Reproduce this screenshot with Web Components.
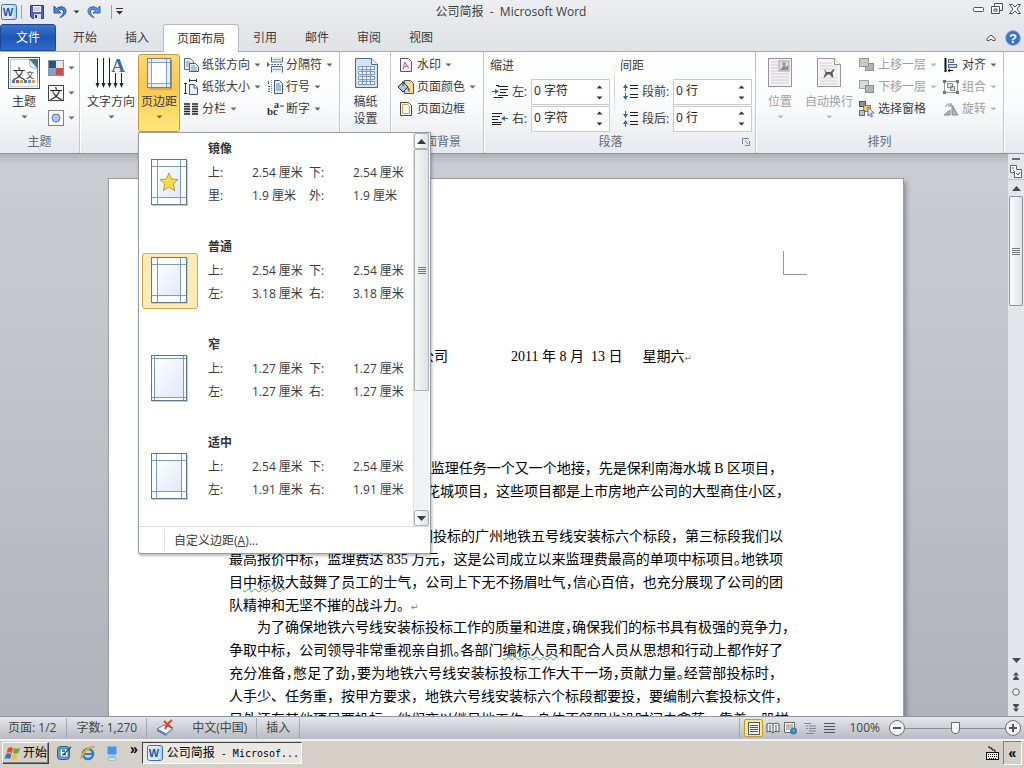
<!DOCTYPE html>
<html lang="zh-CN">
<head>
<meta charset="utf-8">
<title>公司简报 - Microsoft Word</title>
<style>
html,body{margin:0;height:100%;overflow:hidden}
body{font:12px/16px "Open Sans","Noto Sans CJK SC",sans-serif;color:#3b3b3b}
</style>
</head>
<body>
<word-app></word-app>
<script>
const ICONS = {
word:[16,16,'<rect x=".5" y=".5" width="15" height="15" rx="2" fill="#e9f1fb" stroke="#3f6fb5"/><path d="M11 2h3v12h-3" fill="#fff" stroke="#8fb0dc"/><path d="M11.500 5h2M11.500 8h2M11.500 11h2" stroke="#8fb0dc"/><rect x="2" y="2" width="10" height="12" fill="#d5e5f8"/><text x="7" y="12" font-size="11" font-weight="700" font-family="Liberation Sans" text-anchor="middle" fill="#1f57a8">W</text>'],
save:[14,14,'<path d="M.5.5h13v13h-11l-2-2z" fill="#5560b8" stroke="#31388c"/><rect x="3" y="1" width="8" height="6" fill="#e8f0fc"/><path d="M4 3h6M4 5h6" stroke="#a8b8dc"/><rect x="4" y="9" width="7" height="5" fill="#d8dcf0"/><rect x="5" y="10" width="2" height="3" fill="#31388c"/>'],
undo:[14,14,'<path d="M1 1v7h7L5.500 5.500c2-2 5.500-1 5 2-.3 2-2 3.500-3.500 5 3-1 6-3 6-6.500C13 1.500 7 .5 3.500 3.500z" fill="#4f80d4" stroke="#2f56a4"/>'],
redo:[14,14,'<path d="M13 1v7H6l2.500-2.500c-2-2-5.500-1-5 2 .3 2 2 3.500 3.500 5-3-1-6-3-6-6.500C1 1.500 7 .5 10.500 3.500z" fill="#5a96e0" stroke="#2f66b0"/>'],
down:[7,4,'<path d="M.5.500h6L3.500 3.500z" fill="currentColor"/>'],
up:[7,4,'<path d="M.5 3.500h6L3.500.5z" fill="currentColor"/>'],
downBig:[9,5,'<path d="M0 0h9L4.500 5z" fill="currentColor"/>'],
upBig:[9,5,'<path d="M0 5h9L4.500 0z" fill="currentColor"/>'],
custom:[7,7,'<path d="M0 .5h7" stroke="#333"/><path d="M0 3h7L3.500 6.500z" fill="#333"/>'],
min:[12,5,'<rect x=".5" y=".5" width="10" height="4" rx="1" fill="#fff" stroke="#4a5058"/>'],
restore:[12,12,'<path d="M3.500.5h8v7h-8z" fill="#fff" stroke="#4a5058"/><path d="M.5 3.500h8v7h-8z" fill="#fff" stroke="#4a5058"/><path d="M3 6h3v2H3z" fill="none" stroke="#4a5058"/>'],
close:[12,10,'<path d="M.5.500h3L6 3 8.500.500h3L8 5l3.500 4.500h-3L6 7 3.500 9.500h-3L4 5z" fill="#fff" stroke="#4a5058"/>'],
collapse:[10,8,'<path d="M1 6.500V4.500L5 1l4 3.500v2H7L5 5 3 6.500z" fill="#fff" stroke="#4a4f57"/>'],
help:[16,16,'<circle cx="8" cy="8" r="7.500" fill="#3c72c4" stroke="#9cb9e4"/><text x="8" y="12.500" font-size="13" font-weight="700" font-family="Liberation Sans" text-anchor="middle" fill="#fff">?</text>'],
theme:[32,32,'<rect x=".5" y=".5" width="31" height="31" fill="#f4f7fb" stroke="#474d55"/><rect x="2.500" y="2.500" width="27" height="27" fill="#fff" stroke="#c5cfdc"/><path d="M21 2h9v27l-1-17z" fill="#4a6f94"/><path d="M21 2l1 8 8 2z" fill="#e8eef6" stroke="#7690b0" stroke-width=".6"/><text x="11" y="21" font-size="13" text-anchor="middle" fill="#333">文</text><text x="22" y="21" font-size="8" text-anchor="middle" fill="#333">文</text><path d="M4 23h3v3H4z" fill="#5579a8"/><path d="M8 23h3v3H8z" fill="#b85450"/><path d="M12 23h3v3h-3z" fill="#94b455"/><path d="M16 23h3v3h-3z" fill="#8064a2"/><path d="M20 23h3v3h-3z" fill="#4bacc6"/><path d="M24 23h3v3h-3z" fill="#e79b4d"/>'],
colors:[16,16,'<rect x=".5" y=".5" width="15" height="15" fill="#fff" stroke="#8a929c"/><rect x="1" y="1" width="7" height="7" fill="#2c5282"/><rect x="8" y="1" width="7" height="7" fill="#e6e8ea"/><rect x="1" y="8" width="7" height="7" fill="#7ba3d4"/><rect x="8" y="8" width="7" height="7" fill="#c4504c"/>'],
fonts:[16,16,'<rect x=".5" y=".5" width="15" height="15" fill="#fff" stroke="#3f454d"/><text x="8" y="13" font-size="13" text-anchor="middle" fill="#222">文</text>'],
effects:[16,16,'<rect x=".5" y=".5" width="15" height="15" fill="#fff" stroke="#7d8793"/><circle cx="8" cy="8" r="4" fill="#a9c6f0" stroke="#5b81b8"/>'],
textdir:[32,32,'<g stroke="#222"><path d="M2.500 1v27M8.500 1v27M14.500 1v27M20.500 16v12M26.500 16v12"/></g><g fill="#222"><path d="M.5 26h4L2.500 31zM6.500 26h4l-2 5zM12.500 26h4l-2 5zM18.500 26h4l-2 5zM24.500 26h4l-2 5z"/></g><text x="23" y="15" font-size="19" font-weight="700" font-family="Liberation Serif" text-anchor="middle" fill="#3a68a8">A</text>'],
margins:[32,32,'<rect x="4.500" y="1.500" width="23" height="29" fill="#e6effa" stroke="#7b7f88"/><path d="M8 5h16v22H8z" fill="#fff"/><path d="M8.500 2v28M23.500 2v28M5 5.500h22M5 26.500h22" stroke="#7da6d8"/><path d="M28.500 3v29H6" fill="none" stroke="#b08a38"/>'],
orient:[16,14,'<path d="M1.500.5h6l3 3v8h-9z" fill="#e3edf9" stroke="#566a85"/><path d="M3 4h4M3 6h4M3 8h3" stroke="#7a93b8"/><path d="M6.500 5.500h6l3 3v5h-9z" fill="#f3f7fc" stroke="#435a78"/><path d="M8 8h4M8 10h6M8 12h6" stroke="#6d8cb8"/>'],
size:[14,16,'<path d="M5 1.500h8M5.500 0v3M12.500 0v3M1.500 4v11M0 4.500h3M0 14.500h3" stroke="#333" fill="none"/><path d="M5.500 5.500h5l3 3v7h-8z" fill="#e8f0fb" stroke="#435a78"/><path d="M10 5v4h4" fill="#fff" stroke="#435a78"/>'],
columns:[14,12,'<path d="M0 1h6M0 3.500h6M0 6h6M0 8.500h6M0 11h6M8 1h6M8 3.500h6M8 6h6M8 8.500h6M8 11h6" stroke="#222" stroke-width="1.300"/>'],
breaks:[16,16,'<path d="M4.500 0v5h11V0M4.500 15.500v-6h11v6" fill="#e3edf9" stroke="#566a85"/><path d="M4 7.500h12" stroke="#566a85" stroke-dasharray="2 1"/><path d="M6 2.500h8M6 12.500h8" stroke="#8aa8d2"/><path d="M0 5l3 2.500L0 10z" fill="#3467b0"/>'],
linenum:[16,14,'<path d="M1.500 1v3M1 6.500h2M1 9h2M1 11.500h2" stroke="#2a559c"/><path d="M4.500 0v14" stroke="#6d88b0" stroke-dasharray="1 1"/><path d="M7.500.5h5l3 3v10h-8z" fill="#eaf1fb" stroke="#435a78"/><path d="M9 4h4M9 6h5M9 8h5M9 10h5" stroke="#5d82b8"/>'],
hyphen:[17,14,'<text x="0" y="13" font-size="11" font-weight="700" font-family="Liberation Serif" fill="#333">bc</text><text x="7" y="6" font-size="10" font-weight="700" font-family="Liberation Serif" fill="#333">a</text><path d="M13 4h4" stroke="#333"/>'],
genko:[32,32,'<path d="M5.500 1.500h16l6 6v23h-22z" fill="#d3e2f7" stroke="#51688c"/><path d="M21.500 1.500v6h6" fill="#fff" stroke="#51688c"/><g stroke="#8298bd" fill="#f6faff"><path d="M8.500 9.500h16v3h-16zM8.500 14.500h16v3h-16zM8.500 19.500h16v3h-16zM8.500 24.500h16v3h-16z"/><path d="M12.500 9v19M16.500 9v19M20.500 9v19"/></g>'],
watermark:[14,14,'<path d="M1.500.5h8l3 3v10h-11z" fill="#f6f7fa" stroke="#556"/><text x="6.500" y="11" font-size="10" font-family="Liberation Sans" text-anchor="middle" fill="#c44a6c" transform="rotate(-12 6 8)">A</text>'],
pagecolor:[16,14,'<path d="M6.500.5h6l3 3v10h-9z" fill="#fbd98a" stroke="#555"/><path d="M0 7l5-5 5 5-5 5z" fill="#a9c4e6" stroke="#333"/><path d="M5 1v5" stroke="#333"/><path d="M10 7c2 1 2 4 1 5-1-1-2-3-1-5" fill="#2f64b8"/>'],
borders:[14,14,'<path d="M1.500.5h8l3 3v10h-11z" fill="#fdf6e6" stroke="#4d4a44"/><path d="M3.500 2.500h5l2 2v7h-7z" fill="#fff" stroke="#d8a850"/>'],
indentL:[16,14,'<path d="M6 1.500h10M8 4.500h8M8 7.500h6M6 10.500h10M2 12.500h9M4 .500h3" stroke="#222" stroke-width="1.200"/><path d="M0 6.500h4" stroke="#3465b0"/><path d="M3 4l4 2.500L3 9z" fill="#3465b0"/>'],
indentR:[16,14,'<path d="M0 1.500h10M0 4.500h8M0 7.500h6M0 10.500h10M0 12.500h9" stroke="#222" stroke-width="1.200"/><path d="M16 6.500h-4" stroke="#3465b0"/><path d="M13 4L9 6.500 13 9z" fill="#3465b0"/>'],
spaceB:[16,16,'<path d="M3.500 2v5M3.500 9v5" stroke="#3465b0"/><path d="M1 4l2.500-4L6 4zM1 12l2.500 4L6 12z" fill="#3465b0"/><path d="M8 1.500h8M8 4.500h8M8 10.500h8M8 13.500h8" stroke="#222"/>'],
spaceA:[16,16,'<path d="M3.500 0v4M3.500 12v4" stroke="#3465b0"/><path d="M1 3l2.500 4L6 3zM1 13l2.500-4L6 13z" fill="#3465b0"/><path d="M8 1.500h8M8 4.500h8M8 10.500h8M8 13.500h8" stroke="#222"/>'],
position:[32,32,'<rect x="4.500" y="1.500" width="23" height="28" fill="#f3f1f4" stroke="#98949c"/><path d="M7 5h7M7 8h7M7 11h7M7 14h7M7 17h18M7 20h18M7 23h18M7 26h18" stroke="#d3cdd4"/><rect x="15" y="4" width="10" height="10" fill="#e2e0e4" stroke="#a09ca4"/><path d="M16 13l4-5 2 2 2-2v5z" fill="#8f8b92"/><circle cx="20" cy="7" r="2" fill="#a29ea5"/>'],
wrap:[32,32,'<path d="M4.500 1.500h17l6 6v22h-23z" fill="#f5f3f5" stroke="#98949c"/><path d="M21.500 1.500v6h6" fill="#fff" stroke="#98949c"/><path d="M7 6h12M7 9h17M7 12h17M7 21h17M7 24h17M7 27h17" stroke="#d6d0d6"/><path d="M11 12l2.500 3h4l3-3 1 1-2 3 1 4-1.500.5-2-3h-2.500l-3 3-1-.5 2-4z" fill="#5f5a61"/>'],
front:[16,14,'<rect x="6.500" y="5.500" width="8" height="7" fill="#b5b5b7" stroke="#8e8e92"/><rect x=".5" y=".5" width="9" height="8" fill="#c9c9cb" stroke="#98989c"/>'],
back:[16,14,'<rect x=".5" y=".5" width="9" height="8" fill="#d9d9dc" stroke="#a2a2a6"/><rect x="6.500" y="5.500" width="8" height="7" fill="#b5b5b7" stroke="#8e8e92"/>'],
pane:[16,16,'<rect x=".5" y=".5" width="6" height="5" fill="#8c939c" stroke="#4a4f58"/><rect x="4.500" y="4.500" width="7" height="6" fill="#f5c64e" stroke="#9c7a24"/><rect x=".5" y="9.500" width="5" height="5" fill="#bcc2ca" stroke="#666c75"/><path d="M9 6l6 6-3 .3 1.500 3-1.500.700-1.500-3L9 15z" fill="#dceafa" stroke="#3c6090" stroke-width=".8"/>'],
align:[14,14,'<path d="M1.500 0v14" stroke="#111" stroke-width="2"/><rect x="4.500" y="1.500" width="5" height="3" fill="#c8d6e8" stroke="#556a88"/><rect x="4.500" y="6.500" width="8" height="3" fill="#c8d6e8" stroke="#556a88"/><path d="M4 12.500h5M6 11l-2 1.500L6 14" stroke="#111" fill="none"/>'],
group:[16,14,'<path d="M1.500 1.500h13v11h-13z" fill="none" stroke="#999"/><path d="M0 0h3v3H0zM13 0h3v3h-3zM0 11h3v3H0zM13 11h3v3h-3z" fill="#77777b"/><path d="M4.500 3.500h5v4h-5zM7.500 6.500h4v4h-4z" fill="#ddd" stroke="#88888c"/>'],
rotate:[16,14,'<path d="M1 13l6-5v5zM9 13V3l6 10z" fill="#b4b4b8" stroke="#8a8a90"/><path d="M3 5c0-3 3-4 5-2M8 1v3H5" fill="none" stroke="#8a8a90"/>'],
launch:[8,8,'<path d="M.5 6V.5H7" fill="none" stroke="#7b8490"/><path d="M3 3l3 3M7.500 3v4.500H3" fill="none" stroke="#7b8490"/>'],
ruler:[12,13,'<path d="M.5.500h6v4h5v8h-7v-5h-4z" fill="#fff" stroke="#5b6470"/><path d="M2 3h2M6 8l2 2 2-3M3 5l2 2" fill="none" stroke="#5b6470"/>'],
prev:[8,8,'<path d="M1 3.500L4 0l3 3.500zM1 7l3-3.500L7 7z" fill="#444b55"/><path d="M1 7.500h6" stroke="#444b55"/>'],
next:[8,8,'<path d="M1 1h6L4 4.500zM1 4.500h6L4 8z" fill="#444b55"/><path d="M1 .5h6" stroke="#444b55"/>'],
ball:[8,8,'<circle cx="4" cy="4" r="3.300" fill="#eef0f4" stroke="#59616d"/>'],
spell:[18,16,'<path d="M1 9l7-4 9 3-7 6z" fill="#f4f8fd" stroke="#5d6f88"/><path d="M1 9l9 5v2L1 11z" fill="#4d7fc4"/><path d="M10 14l7-6v2l-7 6z" fill="#8aa8d2"/><path d="M8 1c3 3 5 5 8 7M16 0c-3 2-5 5-7 9" stroke="#d8422c" stroke-width="2" fill="none"/>'],
vPrint:[14,13,'<rect x="1.500" y=".5" width="11" height="12" fill="#fff" stroke="#555"/><path d="M3 3.500h8M3 5.500h8M3 7.500h8M3 9.500h8" stroke="#555"/>'],
vRead:[14,12,'<path d="M1 2c2-1 4-1 6 0 2-1 4-1 6 0v8c-2-1-4-1-6 1-2-2-4-2-6-1z" fill="#f4f4f4" stroke="#555"/><path d="M7 2v9M3 4h2M3 6h2M3 8h2M9 4h2M9 6h2M9 8h2" stroke="#555"/>'],
vWeb:[14,13,'<path d="M.5.500h10v10H.5z" fill="#fff" stroke="#666"/><path d="M2 3h7M2 5h7M2 7h4" stroke="#777"/><circle cx="9.500" cy="9" r="3.500" fill="#3f79b8"/><path d="M8 7l3 1-1 3z" fill="#7cb874"/>'],
vOut:[12,11,'<path d="M0 .500h7M2 3h2M5 3h7M2 5.500h2M5 5.500h7M5 8h7M2 10.500h8" stroke="#85898f"/>'],
vDraft:[12,10,'<path d="M0 .500h11M0 3.500h11M0 6.500h11M0 9.500h11" stroke="#555"/>'],
flag:[18,16,'<path d="M4 3c2-1 4-1 5 0L8 8C6 7 4 7 2.500 8z" fill="#e0522c"/><path d="M10 3c2 1 4 1 6 0l-1.500 5c-2 1-4 1-5.500 0z" fill="#6bab3c"/><path d="M2 9c2-1 4-1 5.500 0L6 14c-2-1-4-1-5.500 0z" fill="#3a72c8"/><path d="M8.500 9c2 1 4 1 5.500 0l-1.500 5c-2 1-4 1-5.500 0z" fill="#f0c034"/>'],
desk:[16,16,'<rect x="1.500" y="1.500" width="12" height="13" rx="3" fill="#6aa8d0" stroke="#235f86"/><rect x="4" y="4" width="8" height="8" fill="#fff" stroke="#3a78a4"/><path d="M6 6h3M6 9.500h4M8 9l7-7" stroke="#1f4f78" stroke-width="1.300"/>'],
ie:[16,16,'<circle cx="8" cy="9" r="5" fill="none" stroke="#2f7fd0" stroke-width="2.600"/><path d="M4 9h9" stroke="#2f7fd0" stroke-width="2"/><path d="M1 14C-1 9 9-1 15 2c-5 0-11 6-14 12" fill="#f0b52c" stroke="#c98a14" stroke-width=".5"/>'],
monitor:[16,16,'<rect x="3" y="1" width="10" height="9" rx="1.500" fill="#4a94e0" stroke="#b8d4f0"/><path d="M6 10h4l2 3H4z" fill="#9fc2e8"/><ellipse cx="8" cy="14" rx="4.500" ry="1.500" fill="#d8e8f8" stroke="#6b93bd" stroke-width=".6"/>'],
keyboard:[14,15,'<path d="M3 0v2h3v2h3v2" fill="none" stroke="#111"/><rect x=".5" y="6.500" width="12" height="7" fill="#fff" stroke="#111"/><path d="M2 8.500h9M2 10.500h9M3 12.500h7" stroke="#111" stroke-dasharray="1 1"/>']
};
const thumb = (l, t, star) => `<rect x="1" y="1" width="36" height="46" fill="#c6ccd4"/><rect x=".5" y=".5" width="35" height="45" fill="#fbfdff" stroke="#64778c"/><path d="M${l} ${t}h${36-2*l}v${46-2*t}h-${36-2*l}z" fill="url(#p)"/><path d="M${l+.5} 1v44M${35.5-l} 1v44M1 ${t+.5}h34M1 ${45.5-t}h34" stroke="#7d9db8"/>` + (star ? '<path d="M18 14l2.600 6 6.400.6-4.800 4.400 1.500 6.500L18 28l-5.700 3.500 1.500-6.500L9 20.600l6.400-.6z" fill="#f8dc4c" stroke="#c9962c"/>' : '');
ICONS.mMirror = [38,48,thumb(6,7,true)];
ICONS.mNormal = [38,48,thumb(6,7)];
ICONS.mNarrow = [38,48,thumb(3,3)];
ICONS.mModerate = [38,48,thumb(5,7)];

const RESET = '*{box-sizing:border-box}button,input{font:inherit;color:inherit;margin:0}button{background:none;border:0;padding:0;cursor:default}';

function define(name, render) {
  customElements.define(name, class extends HTMLElement {
    constructor() {
      super();
      this.attachShadow({mode: 'open'});
    }
    connectedCallback() {
      if (this.shadowRoot.firstChild) return;
      const t = document.createElement('template');
      t.innerHTML = `<style>${RESET}</style>` + render(this);
      this.shadowRoot.append(t.content.cloneNode(true));
    }
  });
}

define('ui-icon', el => {
  const [w, h, body] = ICONS[el.getAttribute('name')];
  return `<style>:host{display:inline-flex;flex:none;width:${w}px;height:${h}px}svg{display:block;overflow:visible}</style>
  <svg width="${w}" height="${h}" viewBox="0 0 ${w} ${h}" font-family="Noto Sans CJK SC" aria-hidden="true"><defs><linearGradient id="p" x2="1" y2="1"><stop stop-color="#fff"/><stop offset="1" stop-color="#dde8fa"/></linearGradient></defs>${body}</svg>`;
});

/* Title bar */
define('title-bar', () => `<style>
:host{display:grid;grid-template-columns:1fr auto 1fr;align-items:center;height:24px;padding:0 3px 0 1px}
.quick,.win{display:flex;align-items:center}
.quick{gap:4px;padding-bottom:1px}.quick i{width:1px;height:14px;background:#9aa0a8;margin-right:4px}
.quick .gap{margin:0;background:none}.quick .last{margin:0 0 0 6px}
.quick button,.win button{display:flex}
.drop{margin:0 3px 0 2px}
.win{justify-content:flex-end;gap:6px;padding-bottom:6px}
h1{font-size:12px;line-height:16px;font-weight:400;margin:0}
</style>
<div class="quick"><button aria-label="Word"><ui-icon name="word"></ui-icon></button><i></i>
<button aria-label="保存"><ui-icon name="save"></ui-icon></button><i class="gap"></i>
<button aria-label="撤消"><ui-icon name="undo"></ui-icon></button><button class="drop" aria-label="撤消列表"><ui-icon name="down"></ui-icon></button>
<button aria-label="重复"><ui-icon name="redo"></ui-icon></button><i class="last"></i>
<button aria-label="自定义快速访问工具栏"><ui-icon name="custom"></ui-icon></button></div>
<h1>公司简报&nbsp; -&nbsp; Microsoft Word</h1>
<div class="win"><button aria-label="最小化"><ui-icon name="min"></ui-icon></button><button aria-label="还原"><ui-icon name="restore"></ui-icon></button><button aria-label="关闭"><ui-icon name="close"></ui-icon></button></div>`);

/* Ribbon tabs */
define('ribbon-tabs', () => `<style>
:host{display:flex;align-items:flex-end;height:28px;border-bottom:1px solid #a5acb5}
nav{display:flex;height:100%}
button{height:27px;padding:0 14px}
.file{width:56px;padding:0;margin-right:3px;color:#fff;border-radius:3px 3px 0 0;border:1px solid #1c4a98;background:linear-gradient(#3a74cc,#1f55b4 50%,#2c6bd0)}
.on{height:28px;background:#fff;border:1px solid #b5bac1;border-bottom:0;border-radius:3px 3px 0 0;padding:0 13px}
.side{margin-left:auto;display:flex;gap:9px;align-items:center;height:27px;padding-right:3px}
.side button{padding:0;height:auto;display:flex}
</style>
<nav aria-label="功能区选项卡"><button class="file">文件</button><button>开始</button><button>插入</button><button class="on">页面布局</button><button>引用</button><button>邮件</button><button>审阅</button><button>视图</button></nav>
<div class="side"><button aria-label="折叠功能区"><ui-icon name="collapse"></ui-icon></button><button aria-label="帮助"><ui-icon name="help"></ui-icon></button></div>`);

/* A captioned ribbon group: contents on top, caption at the bottom */
define('ribbon-group', el => `<style>
:host{display:flex;flex-direction:column;flex:none;height:100%;border-right:1px solid #c3c8cf;box-shadow:1px 0 #fff}
.body{display:flex;height:80px;padding-top:2px}
footer{position:relative;text-align:center;line-height:20px;color:#5f6b7c}
:host([launcher]) footer{padding-right:18px}
button{position:absolute;right:5px;top:6px;display:flex}
</style><div class="body"><slot></slot></div><footer>${el.getAttribute('label')}${el.hasAttribute('launcher') ? '<button aria-label="段落设置"><ui-icon name="launch"></ui-icon></button>' : ''}</footer>`);

define('big-button', el => `<style>
:host{display:block;flex:none;position:relative}
button{display:flex;flex-direction:column;align-items:center;width:100%;height:78px;padding-top:2px;border:1px solid transparent;border-radius:3px;line-height:17px;color:${el.hasAttribute('off') ? '#a0a0a0' : 'inherit'}}
:host([pressed]) button{border-color:#c29a3f;background:linear-gradient(#fbd976,#f9c751 40%,#ffe77c)}
.t{margin-top:4px;white-space:pre-line}
.a{margin-top:5px;color:${el.hasAttribute('off') ? '#b5b5b5' : '#666'};display:flex}
</style><button><ui-icon name="${el.getAttribute('icon')}"></ui-icon><span class="t">${el.getAttribute('label').replace('|', '\n')}</span>${el.hasAttribute('plain') ? '' : '<span class="a"><ui-icon name="down"></ui-icon></span>'}</button><slot></slot>`);

define('small-button', el => `<style>
:host{display:block}
button{display:flex;align-items:center;height:22px;gap:3px;white-space:nowrap;color:${el.hasAttribute('off') ? '#a0a0a0' : 'inherit'}}
.i{width:16px;display:flex;justify-content:center}
.a{display:flex;margin-left:1px;color:${el.hasAttribute('off') ? '#b5b5b5' : '#666'}}
</style><button aria-label="${el.getAttribute('label') || el.getAttribute('hint')}"><span class="i"><ui-icon name="${el.getAttribute('icon')}"></ui-icon></span>${el.getAttribute('label') || ''}${el.hasAttribute('plain') ? '' : '<span class="a"><ui-icon name="down"></ui-icon></span>'}</button>`);

define('spin-field', el => `<style>
:host{display:flex;align-items:center;height:27px}
label{display:flex;align-items:center;gap:4px;width:${el.getAttribute('w')}px}
.box{display:flex;width:79px;height:26px;border:1px solid #c9cdd3;background:#fff;color:#222}
input{flex:1;min-width:0;border:0;padding:0 0 2px 2px;background:none;outline:0}
.s{display:flex;flex-direction:column;justify-content:space-around;width:13px;padding:1px 0}
.s button{display:flex;color:#333}
</style><label for="f"><ui-icon name="${el.getAttribute('icon')}"></ui-icon>${el.getAttribute('label')}</label>
<span class="box"><input id="f" value="${el.getAttribute('value')}"><span class="s"><button aria-label="增加"><ui-icon name="up"></ui-icon></button><button aria-label="减少"><ui-icon name="down"></ui-icon></button></span></span>`);

/* Margins gallery */
define('margin-option', el => {
  const [a, b, c, d] = el.getAttribute('values').split(',');
  const [k1, k2] = (el.getAttribute('sides') || '左,右').split(',');
  return `<style>
:host{display:block;height:98px}
button{display:grid;grid-template-columns:56px 1fr;column-gap:10px;width:100%;height:98px;padding-left:3px;text-align:left;align-items:start}
.p{width:56px;height:56px;margin-top:18px;display:flex;align-items:center;justify-content:center;border:1px solid transparent;border-radius:3px}
:host([selected]) .p{border-color:#d8a850;background:#fcebb6}
.d{display:grid;grid-template-columns:44px 57px 44px auto;line-height:23px;justify-content:start;white-space:nowrap}
b{grid-column:1/-1;line-height:24px;color:#333}
</style><button><span class="p"><ui-icon name="${el.getAttribute('icon')}"></ui-icon></span>
<span class="d"><b>${el.getAttribute('label')}</b><span>上:</span><span>${a} 厘米</span><span>下:</span><span>${b} 厘米</span><span>${k1}:</span><span>${c} 厘米</span><span>${k2}:</span><span>${d} 厘米</span></span></button>`;
});

define('margins-menu', () => `<style>
:host{display:block;position:absolute;left:0;top:78px;width:293px;z-index:10;background:#fff;border:1px solid #979ca4;border-radius:0 0 2px 2px;box-shadow:1px 2px 3px #0004}
.top{display:flex;height:393px}
.list{flex:1;overflow:hidden;padding-top:4px}
.bar{width:16px;margin-right:1px;display:flex;flex-direction:column;background:#f1f2f4;border-left:1px solid #dcdfe3}
.bar button{display:flex;align-items:center;justify-content:center;height:16px;border:1px solid #aab0b8;border-radius:2px;background:linear-gradient(90deg,#fff,#dde1e6);color:#2f3c5c}
.bar .thumb{height:242px;flex-direction:column;gap:1px;border-radius:1px;background:linear-gradient(90deg,#f4f5f6,#e0e3e6)}
.thumb i{width:8px;height:1px;background:#777}
.track{flex:1}
.foot{display:flex;align-items:stretch;height:27px;border-top:1px solid #dcdfe3}
.foot:before{content:"";width:25px;border-right:1px solid #dcdfe3;margin:2px 0}
.foot button{padding:2px 0 0 9px}
</style>
<div class="top"><div class="list">
<margin-option label="镜像" icon="mMirror" values="2.54,2.54,1.9,1.9" sides="里,外"></margin-option>
<margin-option label="普通" icon="mNormal" values="2.54,2.54,3.18,3.18" selected></margin-option>
<margin-option label="窄" icon="mNarrow" values="1.27,1.27,1.27,1.27"></margin-option>
<margin-option label="适中" icon="mModerate" values="2.54,2.54,1.91,1.91"></margin-option>
</div><div class="bar"><button aria-label="向上滚动"><ui-icon name="upBig"></ui-icon></button><button class="thumb" aria-label="滚动条"><i></i><i></i><i></i><i></i></button><span class="track"></span><button aria-label="向下滚动"><ui-icon name="downBig"></ui-icon></button></div></div>
<div class="foot"><button>自定义边距(<u>A</u>)...</button></div>`);

define('word-ribbon', () => `<style>
:host{display:flex;position:relative;z-index:5;height:102px;background:linear-gradient(#fff,#fbfcfd 50%,#e6e9ed);border-bottom:1px solid #8d939b}
.col{display:flex;flex-direction:column}
.tall{gap:3px;padding-top:3px}
.mid{width:87px;padding-left:3px}
.head{line-height:22px;padding:1px 0 2px}
.field{padding-left:2px}
.rule{width:1px;background:linear-gradient(#fff,#c9cdd3 50%,#fff);margin:4px 5px 10px 4px}
</style>
<ribbon-group label="主题" style="width:80px"><big-button icon="theme" label="主题" style="width:48px"></big-button>
 <div class="col tall"><small-button icon="colors" hint="颜色"></small-button><small-button icon="fonts" hint="字体"></small-button><small-button icon="effects" hint="效果"></small-button></div></ribbon-group>
<ribbon-group label="页面设置" style="width:260px"><big-button icon="textdir" label="文字方向" style="width:54px;margin-left:4px"></big-button>
 <big-button icon="margins" label="页边距" pressed style="width:42px"><margins-menu></margins-menu></big-button>
 <div class="col mid"><small-button icon="orient" label="纸张方向"></small-button><small-button icon="size" label="纸张大小"></small-button><small-button icon="columns" label="分栏"></small-button></div>
 <div class="col"><small-button icon="breaks" label="分隔符"></small-button><small-button icon="linenum" label="行号"></small-button><small-button icon="hyphen" label="断字"></small-button></div></ribbon-group>
<ribbon-group label="稿纸" style="width:51px"><big-button icon="genko" label="稿纸|设置" plain style="width:51px"></big-button></ribbon-group>
<ribbon-group label="页面背景" style="width:93px"><div class="col" style="padding-left:7px"><small-button icon="watermark" label="水印"></small-button><small-button icon="pagecolor" label="页面颜色"></small-button><small-button icon="borders" label="页面边框" plain></small-button></div></ribbon-group>
<ribbon-group label="段落" launcher style="width:272px"><div class="col" style="padding-left:6px"><span class="head">缩进</span><spin-field class="field" icon="indentL" label="左:" value="0 字符" w="39"></spin-field><spin-field class="field" icon="indentR" label="右:" value="0 字符" w="39"></spin-field></div>
 <span class="rule"></span>
 <div class="col"><span class="head">间距</span><spin-field class="field" icon="spaceB" label="段前:" value="0 行" w="51"></spin-field><spin-field class="field" icon="spaceA" label="段后:" value="0 行" w="51"></spin-field></div></ribbon-group>
<ribbon-group label="排列" style="width:248px"><big-button icon="position" label="位置" off style="width:48px"></big-button><big-button icon="wrap" label="自动换行" off style="width:50px;margin-right:5px"></big-button>
 <div class="col" style="width:84px"><small-button icon="front" label="上移一层" off></small-button><small-button icon="back" label="下移一层" off></small-button><small-button icon="pane" label="选择窗格" plain></small-button></div>
 <div class="col"><small-button icon="align" label="对齐"></small-button><small-button icon="group" label="组合" off></small-button><small-button icon="rotate" label="旋转" off></small-button></div></ribbon-group>`);

/* Document */
define('doc-page', () => `<style>
:host{display:block;flex:0 1 794px;min-width:0;background:#fff;box-shadow:0 0 0 1px #9a9fa6,3px 3px 5px #0005;color:#000;font:14px/23px "Liberation Serif","Noto Sans CJK SC",serif;padding:0 120px}
.top{display:flex;justify-content:flex-end;align-items:flex-end;height:96px;margin-right:-24px}
.top i{width:24px;height:24px;border:solid #999;border-width:0 0 1px 1px}
.date{display:flex;padding:70px 0 0 191px;white-space:pre}
.date span:nth-child(2){margin:0 20px 0 63px}
s{color:#777;font:9px/23px "DejaVu Sans";text-decoration:none}
.mark{padding-left:195px;margin-bottom:62px}
p{margin:0 0 -1px}
p span{display:block;height:23px;white-space:nowrap;text-align:justify;text-align-last:justify}
p .r{text-align:right;text-align-last:right}
p .hang{margin-right:-7px}
p .end{text-align-last:left}
p .in{padding-left:28px}
em{font-style:normal;font-feature-settings:"halt"}
u{text-decoration:underline wavy #4aa64a 1px;text-underline-offset:1px}
</style>
<div class="top"><i></i></div>
<div class="date"><span>公司</span><span>2011 年 8 月&nbsp; 13 日</span><span>星期六<s>↵</s></span></div>
<div class="mark"><s>↵</s></div>
<p><span class="r">监理任务一个又一个地接，先是保利南海水城 B 区项目，</span><span class="r hang">花城项目，这些项目都是上市房地产公司的大型商住小区，</span><span></span></p>
<p><span class="r">们投标的广州地铁五号线安装标六个标段，第三标段我们以</span><span>最高报价中标，监理费达 835 万元，这是公司成立以来监理费最高的单项中标项目<em>。</em>地铁项</span><span>目<u>中标极</u>大鼓舞了员工的士气，公司上下无不扬眉吐气<em>，</em>信心百倍，也充分展现了公司的团</span><span class="end">队精神和无坚不摧的战斗力。<s>↵</s></span></p>
<p><span class="in">为了确保地铁六号线安装标投标工作的质量和进度<em>，</em>确保我们的标书具有极强的竞争力<em>，</em></span><span>争取中标，公司领导非常重视亲自抓<em>。</em>各部门<u>编标人员</u>和配合人员从思想和行动上都作好了</span><span>充分准备<em>，</em>憋足了劲<em>，</em>要为地铁六号线安装标投标工作大干一场<em>，</em>贡献力量<em>。</em>经营部投标时，</span><span>人手少、任务重，按甲方要求，地铁六号线安装标六个标段都要投，要编制六套投标文件，</span><span>另外还有其他项目要投标，他们夜以继日地工作，身体不舒服也没时间去拿药、靠着一股拼</span></p>`);

define('doc-scroll', () => `<style>
:host{display:flex;flex-direction:column;align-items:stretch;width:16px;background:#e3e6eb;color:#444b55}
button{display:flex;align-items:center;justify-content:center;height:16px}
.split{height:10px}.split:before{content:"";width:8px;height:2px;background:#666d77}
.thumb{height:110px;margin:0 1px;border:1px solid #8e959f;border-radius:2px;flex-direction:column;gap:1px;background:linear-gradient(90deg,#fcfcfd,#dfe3e8)}
.thumb i{width:8px;height:1px;background:#777}
.ruler{border-bottom:1px solid #c0c5cc}.track{flex:1}
</style>
<button class="split" aria-label="拆分"></button><button class="ruler" aria-label="标尺"><ui-icon name="ruler"></ui-icon></button>
<button aria-label="向上滚动"><ui-icon name="upBig"></ui-icon></button><button class="thumb" aria-label="滚动条"><i></i><i></i><i></i><i></i></button><span class="track"></span>
<button aria-label="向下滚动"><ui-icon name="downBig"></ui-icon></button><button aria-label="前一页"><ui-icon name="prev"></ui-icon></button><button aria-label="选择浏览对象"><ui-icon name="ball"></ui-icon></button><button aria-label="下一页"><ui-icon name="next"></ui-icon></button>`);

/* Status bar */
define('status-bar', () => `<style>
:host{display:flex;align-items:center;justify-content:space-between;height:23px;background:linear-gradient(#e3e6ea,#cdd1d6 50%,#b7bcc3);border-top:1px solid #8f959d;color:#444}
div{display:flex;align-items:center;height:100%}
.l button{height:20px;padding:0 9px;border-right:1px solid #a3a8b0;display:flex;align-items:center}
.l button:first-child{padding:0 10px 0 8px}
.l .proof{border:0}
.r{padding-right:3px}
.view{width:18px;height:18px;display:flex;align-items:center;justify-content:center}
.view:nth-child(n+5){width:20px}
.sep{width:1px;height:20px;background:#a3a8b0;margin-right:4px}
.view.on{width:19px;border:1px solid #c49b3a;border-radius:2px;background:#fde48e;margin-right:1px}
.pct{margin:0 9px}
.z{display:flex;align-items:center;justify-content:center;width:16px;height:16px;border:1px solid #6a6f77;border-radius:8px;background:#f4f5f7}
.z:before{content:"";width:8px;height:2px;background:#555}
.plus:after{content:"";width:2px;height:8px;background:#555;margin-left:-5px;margin-right:3px}
input{appearance:none;width:100px;height:14px;background:linear-gradient(#8b9097,#8b9097) center/100% 1px no-repeat}
input::-webkit-slider-thumb{appearance:none;width:9px;height:12px;background:#f4f5f7;border:1px solid #666b73;border-radius:1px 1px 5px 5px}
</style>
<div class="l"><button>页面: 1/2</button><button>字数: 1,270</button><button class="proof" aria-label="校对"><ui-icon name="spell"></ui-icon></button><button>中文(中国)</button><button>插入</button></div>
<div class="r"><span class="sep"></span><button class="view on" aria-label="页面视图"><ui-icon name="vPrint"></ui-icon></button><button class="view" aria-label="阅读版式"><ui-icon name="vRead"></ui-icon></button><button class="view" aria-label="Web 版式"><ui-icon name="vWeb"></ui-icon></button><button class="view" aria-label="大纲"><ui-icon name="vOut"></ui-icon></button><button class="view" aria-label="草稿"><ui-icon name="vDraft"></ui-icon></button>
<button class="pct">100%</button><button class="z" aria-label="缩小"></button><input type="range" aria-label="显示比例" value="50"><button class="z plus" aria-label="放大"></button></div>`);

/* Desktop taskbar */
define('task-bar', () => `<style>
:host{display:flex;align-items:center;height:29px;padding:0 2px 3px;background:#d4d0c8;border-top:2px solid #f3f2ee;color:#000}
button{display:flex;align-items:center}
.start{width:47px;height:22px;border:1px solid;border-color:#fff #404040 #404040 #fff;box-shadow:inset -1px -1px #808080;gap:1px;padding-left:1px}
.q{display:flex;gap:8px;margin-left:7px}
.more{margin:0 4px 8px 10px;font:700 14px/14px "Liberation Sans"}
.task{width:160px;height:22px;padding-left:4px;gap:4px;border:1px solid;border-color:#404040 #fff #fff #404040;background:#ebe8e3;white-space:nowrap}
.task span span{font-family:"DejaVu Sans Mono";font-size:10px}
.tray{margin-left:auto;display:flex;align-items:center;gap:3px}
.tray .c{width:19px;height:24px;justify-content:center;border:1px solid;border-color:#808080 #fff #fff #808080;font:700 14px/14px "Liberation Sans"}
</style>
<button class="start"><ui-icon name="flag"></ui-icon>开始</button>
<span class="q"><button aria-label="显示桌面"><ui-icon name="desk"></ui-icon></button><button aria-label="浏览器"><ui-icon name="ie"></ui-icon></button><button aria-label="网络"><ui-icon name="monitor"></ui-icon></button></span>
<button class="more">»</button>
<button class="task"><ui-icon name="word"></ui-icon><span>公司简报<span> - Microsof...</span></span></button>
<span class="tray"><button aria-label="键盘"><ui-icon name="keyboard"></ui-icon></button><button class="c">«</button></span>`);

define('word-app', () => `<style>
:host{display:flex;flex-direction:column;height:100vh;min-width:0;background:linear-gradient(#eceef1,#dfe2e6 52px)}
title-bar,ribbon-tabs,word-ribbon,status-bar,task-bar{flex:none}
main{flex:1;min-height:0;display:flex}
.desk{flex:1;min-width:0;overflow:hidden;display:flex;justify-content:center;align-items:flex-start;padding:25px 0 0 4px;background:linear-gradient(#aeb3ba,#caccd1 10px,#c6c9ce 120px,#b0b4ba)}
</style>
<title-bar></title-bar><ribbon-tabs></ribbon-tabs><word-ribbon></word-ribbon>
<main><div class="desk"><doc-page></doc-page></div><doc-scroll></doc-scroll></main>
<status-bar></status-bar><task-bar></task-bar>`);
</script>
</body>
</html>
